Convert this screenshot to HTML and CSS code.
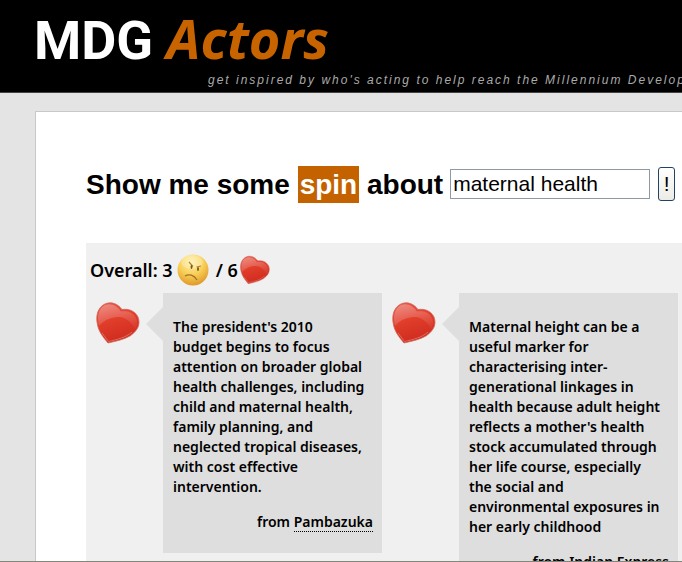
FILE: index.html
```html
<!DOCTYPE html>
<html lang="en">
<head>
<meta charset="utf-8">
<title>MDG Actors</title>
<link rel="stylesheet" href="styles.css">
</head>
<body>
<svg class="defs" width="0" height="0" aria-hidden="true">
  <defs>
    <linearGradient id="red" x1="0.3" y1="0" x2="0.6" y2="1">
      <stop offset="0" stop-color="#e65545"/>
      <stop offset="0.45" stop-color="#e03c2a"/>
      <stop offset="1" stop-color="#cc2a1e"/>
    </linearGradient>
    <linearGradient id="shine" x1="0.2" y1="0" x2="0.6" y2="1">
      <stop offset="0" stop-color="#fff" stop-opacity="0.3"/>
      <stop offset="1" stop-color="#fff" stop-opacity="0.05"/>
    </linearGradient>
    <radialGradient id="yellow" cx="0.45" cy="0.25" r="0.8">
      <stop offset="0" stop-color="#fff0a0"/>
      <stop offset="0.5" stop-color="#f8cf58"/>
      <stop offset="1" stop-color="#dc9120"/>
    </radialGradient>
    <symbol id="heart" viewBox="0 0 44 42">
      <path d="M12 41C7 35 3 30 1.500 23C-1 12 3 4 10 1.500C16 -0.500 22 2 26 7.500C33 6.500 39 9 42 15C45 23 41 29 34 34C28 37.500 21 39 12 41Z" fill="url(#red)" stroke="#cf6a5c" stroke-width="0.8"/>
      <path d="M3 24C0 12 4 4 11 2.500C17 1.500 22 5 25 9.500C31 8.500 37 10 40 16C42 20 41 24 39 27C36 21 31 16 24 15C16 15 9 17 3 24Z" fill="url(#shine)"/>
      <path d="M6 31L12.500 39.500C21 37.500 30 35.500 36 30" fill="none" stroke="#dd6c5c" stroke-width="1"/>
    </symbol>
    <symbol id="sad" viewBox="0 0 32 34">
      <circle cx="16" cy="17" r="15.500" fill="url(#yellow)"/>
      <ellipse cx="15" cy="9" rx="11" ry="7" fill="#fff" opacity="0.25"/>
      <path d="M12 9L16 13.500M24 13L19.500 14" fill="none" stroke="#b08434" stroke-width="1.200"/>
      <ellipse cx="14.500" cy="14" rx="1" ry="2" fill="#7a581c"/>
      <ellipse cx="21" cy="16" rx="1" ry="2" fill="#7a581c"/>
      <path d="M8 23C12 20.500 17 22 20 27" fill="none" stroke="#a0702a" stroke-width="1.200"/>
    </symbol>
  </defs>
</svg>
<header class="masthead">
  <h1 class="brand">MDG <em>Actors</em></h1>
  <p class="tagline">get inspired by who's acting to help reach the Millennium Develop</p>
</header>
<main class="page">
  <form class="search">
    <label for="topic">Show me some <span class="mode">spin</span> about</label>
    <input id="topic" type="text" value="maternal health">
    <button type="button">!</button>
  </form>
  <section class="results">
    <p class="overall">
      <span>Overall: 3</span>
      <svg class="sad" role="img" aria-label="negative"><use href="#sad"/></svg>
      <span>/ 6</span>
      <svg class="glad" role="img" aria-label="positive"><use href="#heart"/></svg>
    </p>
    <div class="feed">
      <article class="entry">
        <svg class="heart" role="img" aria-label="positive"><use href="#heart"/></svg>
        <div class="bubble">
          <p>The president's 2010<br>budget begins to focus attention on broader global health challenges, including child and maternal health, family planning, and<br>neglected tropical diseases, with cost effective intervention.</p>
          <p class="source">from <a href="#pambazuka">Pambazuka</a></p>
        </div>
      </article>
      <article class="entry">
        <svg class="heart" role="img" aria-label="positive"><use href="#heart"/></svg>
        <div class="bubble">
          <p>Maternal height can be a useful marker for characterising inter-generational linkages in health because adult height reflects a mother's health stock accumulated through her life course, especially<br>the social and<br>environmental exposures in her early childhood</p>
          <p class="source">from <a href="#indian-express">Indian Express</a></p>
        </div>
      </article>
    </div>
  </section>
</main>
</body>
</html>
```
FILE: styles.css
```css
* { box-sizing: border-box; }

body {
  display: flex;
  flex-direction: column;
  height: 100vh;
  margin: 0;
  overflow: hidden;
  background: #e4e4e4;
  border-bottom: 1px solid #85857c;
  color: #000;
  font-family: "Noto Sans", "Open Sans", sans-serif;
}

h1, p { margin: 0; }

.defs { position: absolute; }

.masthead {
  flex: none;
  padding: 10px 0 4px 34px;
  background: #000;
  border-bottom: 1px solid #444;
}

.brand {
  color: #fff;
  font: bold 54px/62px Roboto, sans-serif;
}

.brand em {
  color: #c86400;
  font-family: "Noto Sans", sans-serif;
  line-height: 1;
}

.tagline {
  padding-left: 174px;
  overflow: hidden;
  color: #aaa;
  font: italic 12px/16px "Liberation Sans", sans-serif;
  letter-spacing: 2px;
  white-space: nowrap;
}

.page {
  flex: 1;
  display: flex;
  flex-direction: column;
  min-height: 0;
  margin: 18px 0 0 35px;
  padding: 52px 0 0 50px;
  overflow: hidden;
  background: #fff;
  border: solid #c8c8c8;
  border-width: 1px 0 0 1px;
}

.search {
  display: flex;
  align-items: center;
  flex: none;
  height: 40px;
  font: bold 28px/37px "Liberation Sans", sans-serif;
  white-space: nowrap;
}

.mode {
  display: inline-block;
  padding: 0 2px;
  background: #c46200;
  color: #fff;
}

.search input {
  width: 200px;
  height: 30px;
  margin-left: 7px;
  padding: 0 2px;
  border: 1px solid #8b9aa5;
  background: #fff;
  color: #000;
  font: 21px "Liberation Sans", sans-serif;
}

.search button {
  width: 17px;
  height: 34px;
  margin-left: 8px;
  padding: 0;
  border: 1px solid #1f4468;
  border-radius: 3px;
  background: linear-gradient(#fff, #ecebe4);
  color: #000;
  font: 21px "Liberation Sans", sans-serif;
}

.results {
  flex: 1;
  min-height: 0;
  margin-top: 39px;
  padding-right: 4px;
  background: #f0f0f0;
}

.overall {
  display: flex;
  align-items: center;
  height: 50px;
  padding: 4px 0 0 4px;
  font-size: 18px;
  font-weight: 600;
}

.sad {
  width: 32px;
  height: 34px;
  margin: 0 7px 0 4px;
}

.glad {
  width: 30px;
  height: 30px;
  margin-left: 2px;
}

.feed {
  display: grid;
  grid-template-columns: 1fr 1fr;
  align-items: start;
}

.entry {
  display: flex;
  align-items: flex-start;
}

.heart {
  flex: none;
  width: 44px;
  height: 42px;
  margin: 9px 23px 0 10px;
}

.bubble {
  position: relative;
  flex: 1;
  padding: 24px 9px 21px 10px;
  background: #dedede;
  font-size: 14px;
  font-weight: 600;
  line-height: 20px;
}

.bubble::before {
  position: absolute;
  top: 14px;
  right: 100%;
  border: solid transparent;
  border-width: 17px 17px 17px 0;
  border-right-color: #dedede;
  content: "";
}

.source {
  margin-top: 15px;
  text-align: right;
}

.source a {
  border-bottom: 1px dotted #000;
  color: inherit;
  text-decoration: none;
}
```
